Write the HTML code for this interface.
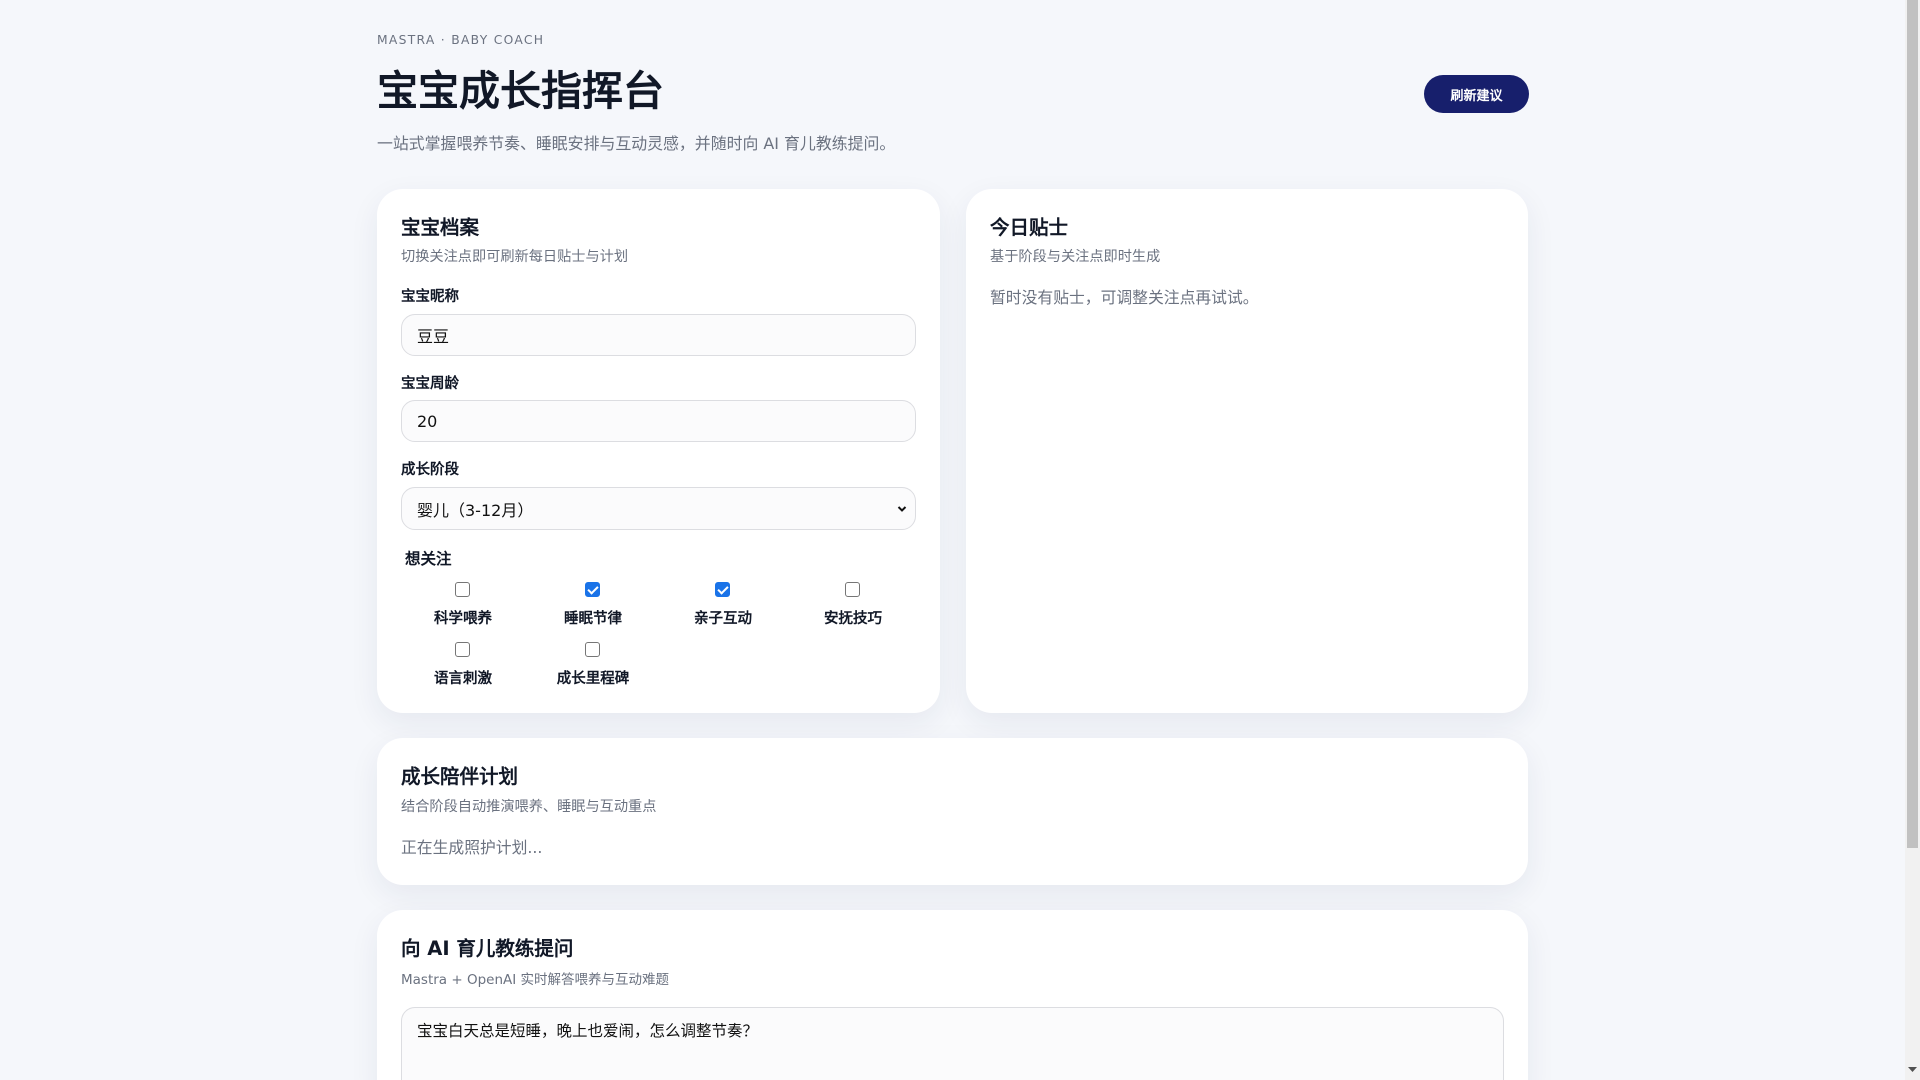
<!DOCTYPE html>
<html><head><meta charset="utf-8"><style>
*{box-sizing:border-box;margin:0;padding:0}
html,body{width:1920px;height:1080px;overflow:hidden}
body{background:#f5f7fb;font-family:"DejaVu Sans","Liberation Sans","WenQuanYi Zen Hei",sans-serif;color:#111827;position:relative}
.wrap{position:absolute;left:377px;width:1151px;top:0}
.eyebrow{position:absolute;top:33px;left:0;font-size:12.3px;letter-spacing:1.3px;color:#6b7280}
h1{position:absolute;top:63px;left:0;font-size:41px;font-weight:700;font-family:"DejaVu Sans","WenQuanYi Zen Hei",sans-serif;line-height:56px;color:#111827}
.sub{position:absolute;top:131px;left:0;font-size:15.9px;color:#6b7280;font-family:"DejaVu Sans","WenQuanYi Zen Hei",sans-serif}
.btn{position:absolute;left:1047px;top:75px;width:105px;height:38px;border-radius:19px;background:#171f6c;color:#fff;font-size:13px;font-weight:700;display:flex;align-items:center;justify-content:center;font-family:"WenQuanYi Zen Hei",sans-serif}
.card{position:absolute;background:#fff;border-radius:26px;box-shadow:0 10px 30px rgba(30,40,80,0.07);padding:24px}
.ct{position:absolute;left:24px;font-size:19.5px;font-weight:700;font-family:"DejaVu Sans","WenQuanYi Zen Hei",sans-serif}
.cs{position:absolute;left:24px;font-size:14.2px;color:#6b7280;font-family:"DejaVu Sans","WenQuanYi Zen Hei",sans-serif}
.lbl{position:absolute;left:24px;font-size:14.5px;font-weight:700;font-family:"WenQuanYi Zen Hei",sans-serif}
.inp{position:absolute;left:24px;width:515px;border:1px solid #dcdde1;background:#fbfbfc;border-radius:14px;font-size:16px;padding-left:15px;display:flex;align-items:center;color:#111;font-family:"DejaVu Sans","WenQuanYi Zen Hei",sans-serif}
.txt{position:absolute;left:24px;font-size:15.8px;color:#6b7280;font-family:"DejaVu Sans","WenQuanYi Zen Hei",sans-serif}
.cb{position:absolute;width:15px;height:15px;border:1.5px solid #767676;border-radius:3px;background:#fff}
.cb.on{background:#1a73e8;border-color:#1a73e8}
.cb.on:after{content:"";position:absolute;left:4px;top:1px;width:4px;height:8px;border:solid #fff;border-width:0 2.5px 2.5px 0;transform:rotate(45deg)}
.cl{position:absolute;font-size:14.5px;font-weight:700;font-family:"WenQuanYi Zen Hei",sans-serif;transform:translateX(-50%);white-space:nowrap}
</style></head><body>
<div class="wrap">
<div class="eyebrow">MASTRA · BABY COACH</div>
<h1>宝宝成长指挥台</h1>
<div class="sub">一站式掌握喂养节奏、睡眠安排与互动灵感，并随时向 AI 育儿教练提问。</div>
<div class="btn">刷新建议</div>

<div class="card" style="left:0;top:189px;width:563px;height:524px">
<div class="ct" style="top:22px">宝宝档案</div>
<div class="cs" style="top:57px">切换关注点即可刷新每日贴士与计划</div>
<div class="lbl" style="top:96px">宝宝昵称</div>
<div class="inp" style="top:125px;height:42px">豆豆</div>
<div class="lbl" style="top:183px">宝宝周龄</div>
<div class="inp" style="top:211px;height:42px">20</div>
<div class="lbl" style="top:269px">成长阶段</div>
<div class="inp" style="top:298px;height:43px">婴儿（3-12月）<svg style="position:absolute;right:8px;top:17px" width="10" height="8" viewBox="0 0 10 8"><path d="M1.5 2 L5 5.5 L8.5 2" fill="none" stroke="#111" stroke-width="2"/></svg></div>
<div class="lbl" style="top:358px;left:28px;font-size:15.5px">想关注</div>
<div class="cb" style="left:78px;top:393px"></div><div class="cl" style="left:86px;top:418px">科学喂养</div>
<div class="cb on" style="left:208px;top:393px"></div><div class="cl" style="left:216px;top:418px">睡眠节律</div>
<div class="cb on" style="left:338px;top:393px"></div><div class="cl" style="left:346px;top:418px">亲子互动</div>
<div class="cb" style="left:468px;top:393px"></div><div class="cl" style="left:476px;top:418px">安抚技巧</div>
<div class="cb" style="left:78px;top:453px"></div><div class="cl" style="left:86px;top:478px">语言刺激</div>
<div class="cb" style="left:208px;top:453px"></div><div class="cl" style="left:216px;top:478px">成长里程碑</div>
</div>

<div class="card" style="left:589px;top:189px;width:562px;height:524px">
<div class="ct" style="top:22px">今日贴士</div>
<div class="cs" style="top:57px">基于阶段与关注点即时生成</div>
<div class="txt" style="top:96px">暂时没有贴士，可调整关注点再试试。</div>
</div>

<div class="card" style="left:0;top:738px;width:1151px;height:147px">
<div class="ct" style="top:22px">成长陪伴计划</div>
<div class="cs" style="top:58px">结合阶段自动推演喂养、睡眠与互动重点</div>
<div class="txt" style="top:97px">正在生成照护计划...</div>
</div>

<div class="card" style="left:0;top:910px;width:1151px;height:200px">
<div class="ct" style="top:22px">向 AI 育儿教练提问</div>
<div class="cs" style="top:58px;font-size:13.5px">Mastra + OpenAI 实时解答喂养与互动难题</div>
<div class="inp" style="top:97px;height:120px;width:1103px;align-items:flex-start;padding-top:11px;font-size:15.5px">宝宝白天总是短睡，晚上也爱闹，怎么调整节奏？</div>
</div>
</div>
<div style="position:absolute;left:1905px;top:0;width:15px;height:1080px;background:#f1f1f1"></div>
<div style="position:absolute;left:1907px;top:0;width:11px;height:848px;background:#c1c1c1"></div>
<svg style="position:absolute;left:1908px;top:1067px" width="9" height="6"><path d="M0 0h9L4.5 5z" fill="#505050"/></svg>
</body></html>
